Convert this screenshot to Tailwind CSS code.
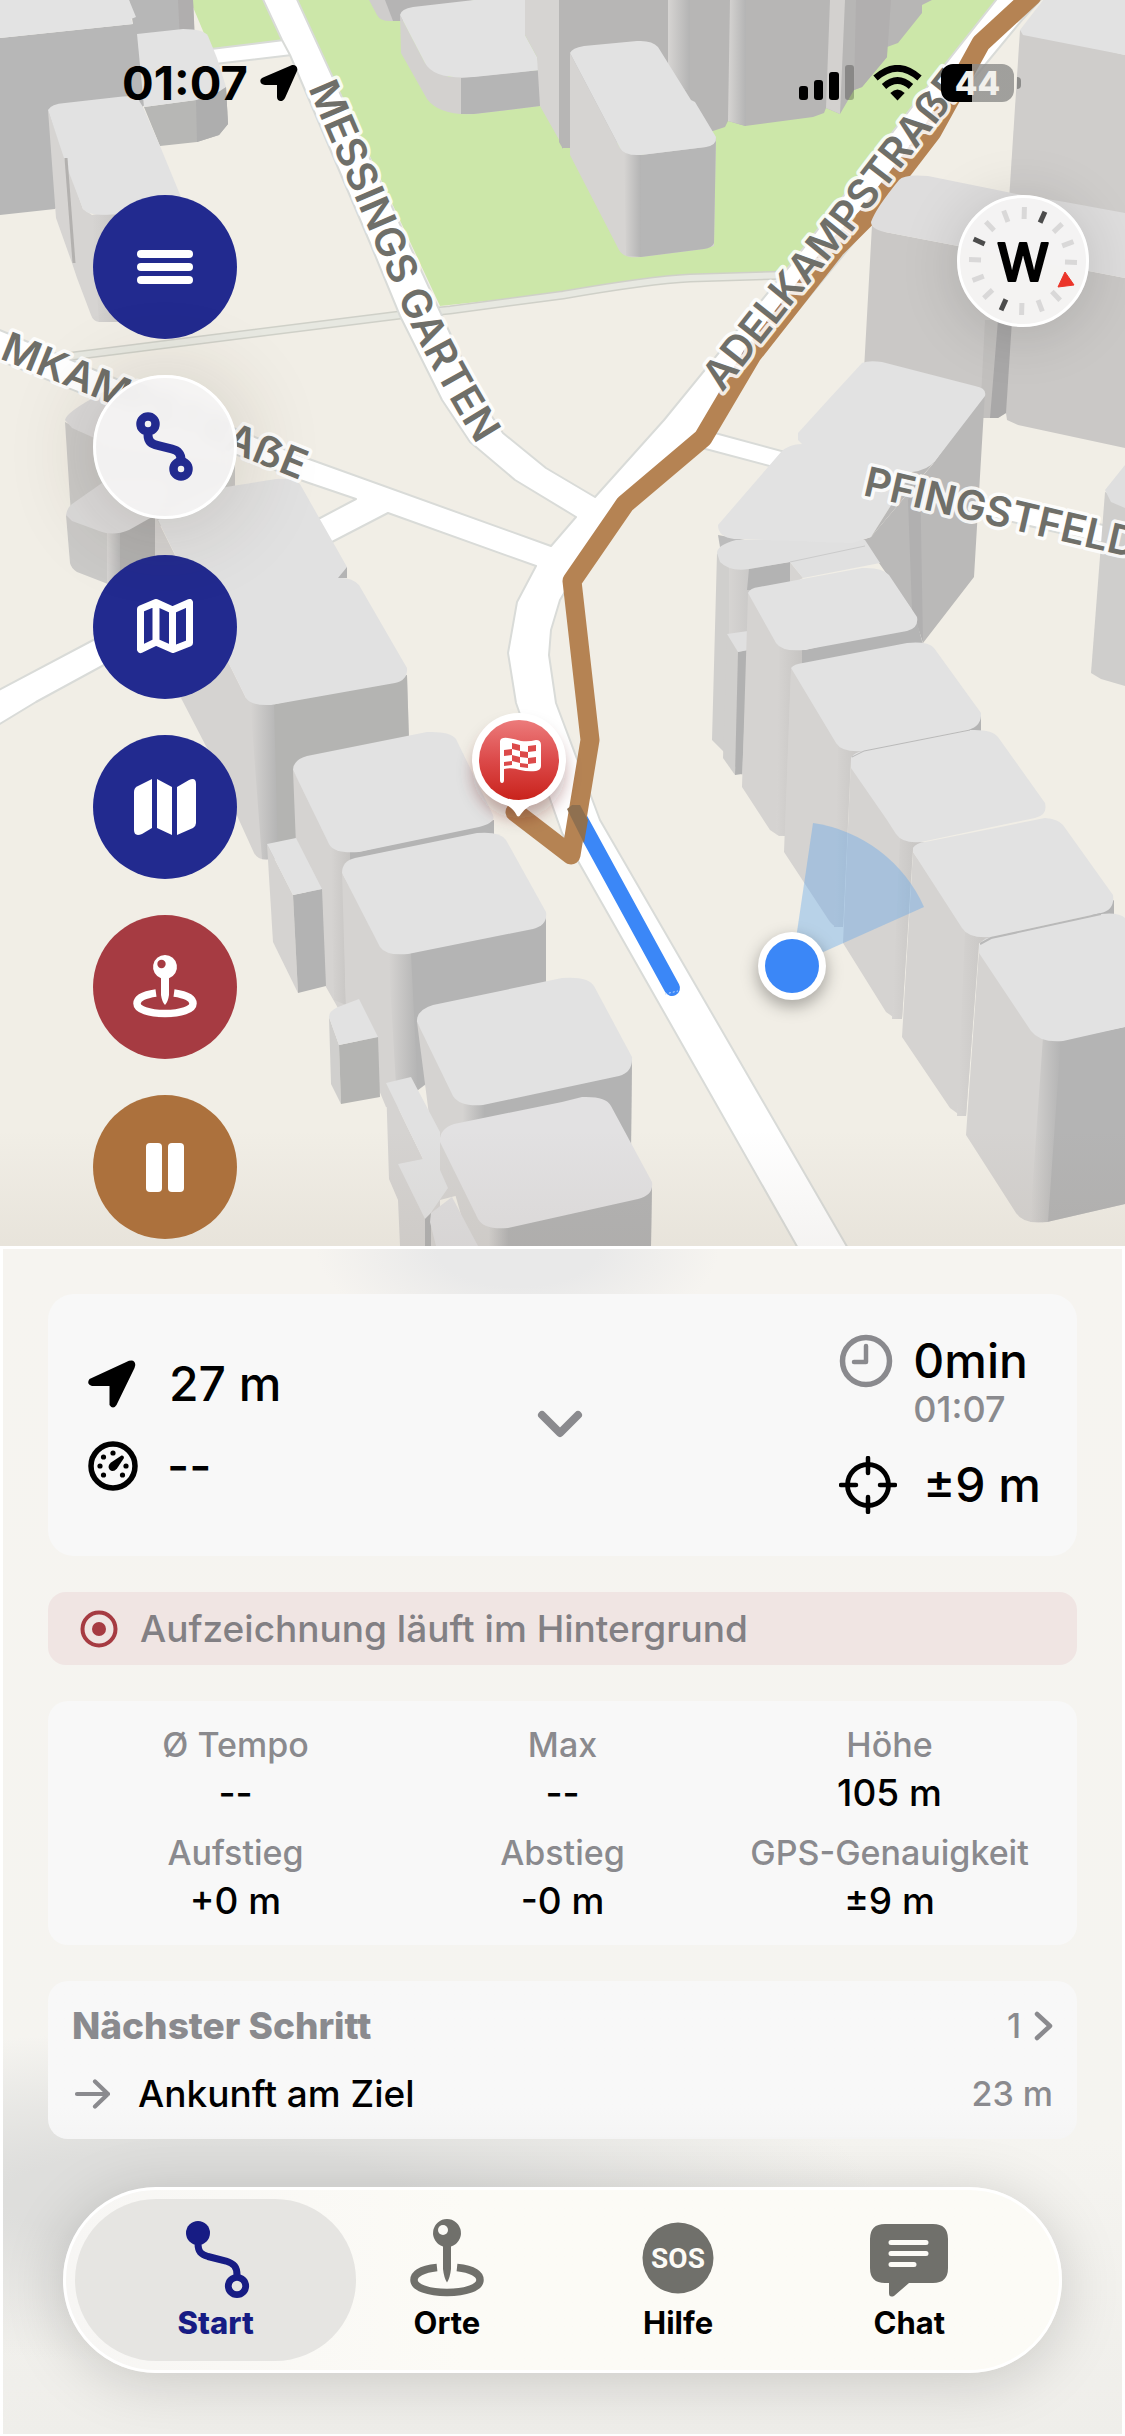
<!DOCTYPE html>
<html lang="de">
<head>
  <meta charset="UTF-8">
  <meta name="viewport" content="width=device-width, initial-scale=1">
  <title>Navigation</title>
  <script src="https://cdn.jsdelivr.net/npm/@tailwindcss/browser@4"></script>
</head>
<body class="min-h-screen flex flex-col bg-[#f1eee6] font-['Inter','Noto_Sans',sans-serif] font-medium text-black">

  <!-- Map with floating controls -->
  <section class="relative flex-1 overflow-hidden">
    <svg class="absolute inset-0 w-full h-full" viewBox="0 0 1125 1246" preserveAspectRatio="xMidYMax slice" aria-hidden="true">
      <defs>
        <linearGradient id="corner"><stop offset="0" stop-color="#d6d4d2"/><stop offset="1" stop-color="#b4b4b4"/></linearGradient>
        <linearGradient id="edge"><stop offset="0" stop-color="#d6d4d2"/><stop offset="1" stop-color="#c6c4c2"/></linearGradient>
        <linearGradient id="pin" x2="0" y2="1"><stop offset="0" stop-color="#ec7b7b"/><stop offset=".5" stop-color="#dc4a4a"/><stop offset="1" stop-color="#c9231c"/></linearGradient>
        <linearGradient id="fade" x2="0" y2="1"><stop offset="0" stop-color="#8a7a6a" stop-opacity="0"/><stop offset="1" stop-color="#8a7a6a" stop-opacity=".09"/></linearGradient>
        <filter id="soft" x="-50%" y="-50%" width="200%" height="200%"><feGaussianBlur stdDeviation="8"/></filter>
        <path id="messings" d="M308 88L400 302Q438 386 500 480"/>
        <path id="adelkamp" d="M722 393Q760 345 794 302L855 228L905 163L1020 17"/>
      </defs>
      <rect width="1125" height="1246" fill="#f1eee6"/>

      <!-- parks -->
      <g fill="#cce7a9">
        <path d="M190 0H263L282 40L211 50Z"/>
        <path d="M297 0L440 306L563 293L670 279L780 274L792 263L935 77L996 0Z"/>
      </g>

      <!-- footpath -->
      <g fill="none" stroke-linejoin="round">
        <path d="M65 357L400 315L450 310L563 295Q650 280 690 278L790 275" stroke="#cfd0c8" stroke-width="9"/>
        <path d="M65 357L400 315L450 310L563 295Q650 280 690 278L790 275" stroke="#e7e8e1" stroke-width="6"/>
      </g>

      <!-- streets -->
      <g fill="#fff" stroke="#d9dbd8" stroke-width="2" stroke-linejoin="round">
        <path d="M211 49L284 40L292 55L215 64Z"/>
        <path d="M-5 328L298 455L551 546L576 517L515 480L470 442L442 400L400 316L370 243L290 55L282 40L261 -5H295L437 305L481 400L503 433L546 468L595 497L664 420L792 263L935 77L1000 -5H1045L1022 20L975 77L860 235L757 360L715 433L800 456V474L698 447L622 508L575 575L560 600L551 630L549 655L556 703L600 820L849 1250H799L562 833L516 703L508 653L517 602L536 566L388 513L332 542L104 665L36 702L-5 727V692L97 638L320 518L356 499L300 480L-5 359Z"/>
        <path d="M830 462L1125 530V548L830 480Z"/>
      </g>

      <!-- route -->
      <path d="M577 814L672 988" fill="none" stroke="#3b87f7" stroke-width="16" stroke-linecap="round"/>
      <path d="M1032 -4L981 43L932 132L866 218L836 248L752 355L703 438L625 504L572 581L590 740L571 855L515 812" fill="none" stroke="#b58353" stroke-width="19" stroke-linejoin="round" stroke-linecap="round"/>
      <path d="M567 809L572 805H580L588 820L584 843Z" fill="#8f7050"/>
      <path d="M665 994L678 991" stroke="#b9d6ff" stroke-width="1" stroke-dasharray="2 2"/>

      <!-- buildings, north west -->
      <path d="M0 38L133 24L129 0H193L195 60L139 110L55 209L0 215Z" fill="#b7b7b7"/>
      <path d="M178 0H193L195 40H180Z" fill="#b0aeae"/>
      <path d="M0 0H129L136 17L131 19L133 24L0 38Z" fill="#e3e3e3"/>
      <path d="M144 107L196 100L226 87L228 124L219 135L197 142L160 146Z" fill="#b7b7b5"/>
      <path d="M196 100L226 87L228 124L219 135L197 142Z" fill="#aeaeae"/>
      <path d="M137 34L183 29Q204 29 208 36L217 58L226 87Q214 96 196 100L144 107Z" fill="#e3e3e3"/>
      <path d="M48 110L83 209L92 215L181 197V300L115 322H99Q93 321 91 315L77 278L72 263L56 218Z" fill="#d6d4d2"/>
      <path d="M92 215H125V322H99Z" fill="url(#edge)"/>
      <path d="M48 110Q51 104 65 103L118 97Q134 95 138 99L143 107L160 146L181 197L122 213Q90 218 83 209L68 170Z" fill="#e2e2e2"/>
      <path d="M66 158L74 263" stroke="#b3b1af" stroke-width="3"/>

      <!-- buildings, north -->
      <path d="M369 0L377 15Q380 21 390 21H402V0Z" fill="#cfcdcc"/>
      <path d="M385 0H474L404 21H393Z" fill="#b5b4b4"/>
      <path d="M400 15L425 63L449 77L540 70V106L474 114Q440 116 427 99L401 53Z" fill="#d3d1cf"/>
      <path d="M461 78L540 70V106L474 114H461Z" fill="#b5b5b5"/>
      <path d="M400 15Q401 9 413 7L474 0H525V35L537 57L540 70L474 77Q434 80 425 63Z" fill="#e2e2e2"/>
      <path d="M525 0H562V145L540 106L537 57L525 35Z" fill="#d6d4d2"/>
      <path d="M562 0H932L922 5V13L898 43L887 47V57L862 87L854 90L840 114L826 108L824 113L813 117L745 126L728 121L725 127L713 131L570 148H562Z" fill="#b7b6b5"/>
      <path d="M559 0H563V149L559 142Z" fill="#b7b6b5"/>
      <path d="M668 0H690V90H668Z" fill="url(#corner)"/>
      <path d="M730 0H746V126L728 121Z" fill="url(#corner)"/>
      <path d="M830 0H845L840 114L826 108Z" fill="#d3d1cf"/>
      <path d="M856 0H891L887 57L862 87L854 90Z" fill="#b1afaf"/>
      <path d="M570 53L620 148L641 155L716 137L714 246L704 249L641 257Q624 259 619 250L570 155Z" fill="#d6d4d2"/>
      <path d="M641 155L706 147L716 137L714 243Q712 248 704 249L641 257Z" fill="#b6b6b6"/>
      <path d="M624 152L641 155V257L626 256Z" fill="url(#corner)"/>
      <path d="M570 53Q572 48 584 46L637 41Q652 40 658 47L691 100L695 102L716 137Q717 145 706 147L641 155Q624 156 620 148Z" fill="#e2e2e2"/>

      <!-- buildings, north east -->
      <path d="M1020 30L1125 55V230L1009 200Z" fill="#cfcdcb"/>
      <path d="M1020 30L1047 -5H1125V55L1023 35Z" fill="#e2e2e2"/>
      <path d="M872 225L885 232L1125 278V448L1018 425L1007 420L1006 413L998 418H985L864 370Z" fill="#cac8c6"/>
      <path d="M994 320H1012L1006 413L998 418H985Z" fill="#a9a8a8"/>
      <path d="M985 320H998L990 418H980Z" fill="#c2c0be"/>
      <path d="M871 222Q876 208 899 180Q904 174 928 176L1022 195L1065 202L1125 213V278L885 232Q871 229 871 222Z" fill="#dedddd"/>
      <path d="M985 392L932 465L871 537L853 543L879 563L917 617L923 643L974 577Z" fill="#bab9b8"/>
      <path d="M920 470L908 500L912 610L923 643Z" fill="#b1b0b0"/>
      <path d="M717 553L733 569L790 562V700L742 775L723 751L712 740Z" fill="#d0cfcd"/>
      <path d="M729 566H790V600L747 640H729Z" fill="url(#corner)"/>
      <path d="M749 569L790 562V590H747Z" fill="#b3b3b3"/>
      <path d="M718 535L745 540L720 547Z" fill="#bcbcbc"/>
      <path d="M790 562L803 578L790 585Z" fill="#d6d4d2"/>
      <path d="M717 553Q717 545 736 540H865L880 563L803 578L790 562L749 569Q730 572 720 562Z" fill="#e0e0e0"/>
      <path d="M790 562L865 546" stroke="#cbcbcb"/>
      <path d="M862 363Q869 360 882 362L975 386Q987 388 985 396L932 465Q926 471 912 472L871 537L853 543L734 539Q718 537 718 525L781 452Q789 444 802 444L798 440V433L828 400Z" fill="#e2e2e2"/>
      <path d="M912 472Q928 470 935 461L871 537Z" fill="#bab9b8"/>
      <path d="M727 634L738 652L735 775L723 758Z" fill="#d0cfcd"/>
      <path d="M738 652L748 650L742 774L735 775Z" fill="#b1b1b1"/>
      <path d="M727 634L748 631V650L738 652Z" fill="#e0e0e0"/>
      <path d="M1105 492L1125 500V686L1101 679L1091 673Z" fill="#cfcecc"/>
      <path d="M1105 490L1125 465V508L1111 502Z" fill="#dfdfdf"/>

      <!-- buildings, east row -->
      <path d="M748 593L787 650L804 650L917 625L923 643L800 665L785 836H779L770 830L742 787Z" fill="#d5d3d1"/>
      <path d="M787 650H806L917 622L923 645L791 670Z" fill="#b4b4b4"/>
      <path d="M779 645H802V668L791 670L785 836L776 834Z" fill="url(#edge)"/>
      <path d="M748 593Q750 588 759 587L862 568Q882 567 889 575L917 617Q919 628 907 631L804 650Q782 652 776 643Z" fill="#e2e2e2"/>
      <path d="M791 668L846 749L868 751L851 758L843 927H838Q832 926 828 919L784 852Z" fill="#d5d3d1"/>
      <path d="M838 744L864 751L851 758L843 927H834Z" fill="url(#edge)"/>
      <path d="M960 725L981 715V735Z" fill="#b4b4b4"/>
      <path d="M791 668Q794 664 803 663L907 643Q928 641 934 648L981 713Q982 726 968 730L864 751Q842 753 836 743Z" fill="#e2e2e2"/>
      <path d="M851 758L908 842H925L913 848L902 1019H896L886 1012L843 943Z" fill="#d5d3d1"/>
      <path d="M900 838L921 842L913 848L902 1019H892Z" fill="url(#edge)"/>
      <path d="M851 768V758Q854 752 864 751L970 730Q992 729 998 737L1045 803Q1048 815 1035 818L921 842Q903 844 896 834L887 820Z" fill="#e2e2e2"/>
      <path d="M852 757L864 751L970 730" fill="none" stroke="#b9b9b9"/>
      <path d="M913 852L973 936H995L979 943L966 1116H961L950 1108L902 1037Z" fill="#d5d3d1"/>
      <path d="M965 932L991 937L979 943L966 1116H957Z" fill="url(#edge)"/>
      <path d="M1090 915L1114 900V920Z" fill="#b4b4b4"/>
      <path d="M913 852V848Q916 843 925 842L1045 818Q1058 819 1063 825L1113 895Q1115 910 1101 913L991 937Q969 939 962 928Z" fill="#e2e2e2"/>
      <path d="M979 950L1045 1040H1063L1125 1027V1204L1047 1222Q1024 1225 1016 1213L966 1135Z" fill="#d5d3d1"/>
      <path d="M1060 1040L1125 1027V1204L1047 1222Z" fill="#b4b4b4"/>
      <path d="M1043 1037H1061L1048 1222H1030Z" fill="url(#corner)"/>
      <path d="M979 953V945Q982 939 991 937L1101 914Q1119 912 1125 918V1027L1063 1041Q1040 1043 1031 1031Z" fill="#e2e2e2"/>
      <path d="M980 944L991 938L1101 914" fill="none" stroke="#b9b9b9" stroke-width="2"/>

      <!-- buildings, west -->
      <path d="M65 422L100 440L235 440V490L152 530L71 515Z" fill="#cbcac8"/>
      <path d="M65 420Q66 414 86 402L110 388H170L235 460L110 445L72 428Z" fill="#dad9d9"/>
      <path d="M66 515L110 534L155 515V590L108 584L77 572Q71 568 70 563Z" fill="#cbcac8"/>
      <path d="M107 530H122V588L107 584Z" fill="url(#corner)"/>
      <path d="M120 533L155 510V590L120 588Z" fill="#b1b0af"/>
      <path d="M66 515Q67 508 72 504L102 483H170L152 517L129 530Q115 536 102 532L72 521Z" fill="#dbdada"/>
      <path d="M155 515L246 698L271 705L407 675L409 740L293 800L296 850L267 860Q258 860 254 853L239 820L208 750L181 698L155 640Z" fill="#d5d3d1"/>
      <path d="M271 705L407 675L409 740L296 850H271Z" fill="#b4b4b2"/>
      <path d="M250 700L274 704L278 859H262Z" fill="url(#corner)"/>
      <path d="M158 520L226 487L276 479Q294 478 300 484L347 567Q348 575 338 578Q352 577 359 585L407 668Q408 680 395 683L271 705Q251 706 246 698Z" fill="#e1e1e1"/>
      <path d="M347 567V578L338 578Z" fill="#b4b4b4"/>
      <path d="M293 770L339 852L494 820V835L343 870L346 1005L338 1008L326 987L296 845Z" fill="#d5d3d1"/>
      <path d="M339 852H359L494 820V836L343 868Z" fill="#b4b4b4"/>
      <path d="M330 846L350 852V862L343 868L346 1005L334 1000Z" fill="url(#edge)"/>
      <path d="M293 770Q293 760 307 756L427 732Q450 731 456 739L493 815Q496 823 479 827L359 852Q334 854 329 844Z" fill="#e2e2e2"/>
      <path d="M267 844L293 895L298 993L273 942Z" fill="#d5d3d1"/>
      <path d="M293 895L322 889L326 986L298 993Z" fill="#b3b3b3"/>
      <path d="M267 844L296 838L322 889L293 895Z" fill="#e2e2e2"/>
      <path d="M342 873L390 954L546 915V1000L418 1090L411 1110L386 1107L346 1010Z" fill="#d5d3d1"/>
      <path d="M408 954L546 915V990L418 1090L411 1080Z" fill="#b4b4b4"/>
      <path d="M388 950L411 954L418 1095L396 1085Z" fill="url(#corner)"/>
      <path d="M342 873Q342 861 355 858L477 833Q500 831 506 840L546 912Q548 925 533 929L408 954Q386 956 380 947Z" fill="#e2e2e2"/>
      <path d="M329 1017L339 1045L341 1104L331 1084Z" fill="#d0cfcd"/>
      <path d="M339 1045L378 1037L380 1097L341 1104Z" fill="#b4b4b2"/>
      <path d="M329 1017Q329 1011 338 1007L359 999L378 1037L339 1045Z" fill="#e2e2e2"/>
      <path d="M417 1022L465 1104L483 1105L632 1060L631 1150L440 1200Z" fill="#d5d3d1"/>
      <path d="M479 1104L632 1060L631 1150L479 1130Z" fill="#b3b3b3"/>
      <path d="M462 1102L484 1104V1122H462Z" fill="url(#corner)"/>
      <path d="M417 1022Q416 1010 433 1005L562 978Q588 976 594 986L632 1057Q633 1072 619 1076L483 1105Q460 1107 453 1096Z" fill="#e2e2e2"/>
      <path d="M386 1083L423 1159L440 1180V1246H400L398 1200L389 1179Z" fill="#d5d3d1"/>
      <path d="M386 1083L411 1077L440 1132V1170L448 1188L430 1214L425 1219L398 1164L423 1159Z" fill="#e1e1e1"/>
      <path d="M425 1219L431 1213V1246H425Z" fill="#b1b1b1"/>
      <path d="M440 1142L489 1228L652 1185L651 1246H470Z" fill="#d5d3d1"/>
      <path d="M430 1222L431 1213L452 1197L478 1246H436Z" fill="#dfdedf"/>
      <path d="M506 1228L652 1185L651 1246H504Z" fill="#b3b3b3"/>
      <path d="M488 1226H508V1246H488Z" fill="url(#corner)"/>
      <path d="M440 1142Q439 1129 454 1124L562 1102L582 1097Q606 1096 611 1106L652 1182Q654 1195 638 1199L508 1228Q484 1230 478 1219Z" fill="#e2e1e2"/>

      <!-- street names -->
      <g class="font-['Inter','Noto_Sans',sans-serif] font-semibold text-[41px]" fill="#6f6f69" stroke="#fff" stroke-opacity=".85" stroke-width="7" stroke-linejoin="round" paint-order="stroke">
        <text><textPath href="#messings">MESSINGS GARTEN</textPath></text>
        <text><textPath href="#adelkamp">ADELKAMPSTRAẞE</textPath></text>
        <text text-anchor="end" transform="translate(300 480) rotate(22)">MKAMPSTRAẞE</text>
        <text transform="translate(862 495) rotate(13)">PFINGSTFELD</text>
      </g>

      <!-- own position -->
      <path d="M792 966L813 823A144 144 0 0 1 924 907Z" fill="#63a7ec" fill-opacity=".4"/>
      <circle cx="792" cy="972" r="35" fill="#000" fill-opacity=".3" filter="url(#soft)"/>
      <circle cx="792" cy="966" r="34" fill="#fff"/>
      <circle cx="792" cy="966" r="27" fill="#3b87f7"/>

      <!-- destination pin -->
      <circle cx="519" cy="772" r="46" fill="#5a1f1f" fill-opacity=".35" filter="url(#soft)"/>
      <circle cx="519" cy="760" r="47" fill="#fff"/>
      <path d="M495 799Q512 806 516 814Q518 819 521 814Q526 806 543 799Z" fill="#fff"/>
      <circle cx="519" cy="760" r="40" fill="url(#pin)"/>
      <path d="M500 741Q501 737 508 738Q515 739 521 741Q529 742 536 740Q541 740 541 745V766Q541 770 536 771Q528 772 520 770Q512 767 504 769V780Q504 783 502 783Q500 783 500 780Z" fill="#fff"/>
      <path d="M512 743L520 745V751L512 749ZM528 746L536 745V751L528 752ZM504 750L512 749V755L504 756ZM520 751L528 752V758L520 757ZM512 755L520 757V763L512 761ZM528 758L536 757V763L528 764ZM504 762L512 761V765L504 766ZM520 763L528 764V768L520 767Z" fill="#dc4a4a"/>

      <rect y="1130" width="1125" height="116" fill="url(#fade)"/>
    </svg>

    <div class="relative flex flex-col pb-[7px]">
      <!-- Status bar -->
      <header class="flex items-center justify-between pl-[122px] pr-[104px] pt-[55px]">
        <div class="flex items-center gap-3">
          <time class="text-[47px] leading-[56px] font-bold">01:07</time>
          <svg class="w-[38px] h-[38px]" viewBox="0 0 38 38" aria-hidden="true"><path d="M31 1.500C35 0 38.500 3 37 7L25 34C23 38.500 17 38 17 33V21H5C0 21-1.500 15.500 3 13.500Z"/></svg>
        </div>
        <div class="flex items-center gap-[19px]">
          <svg class="w-[55px] h-[36px]" viewBox="0 0 55 36" aria-hidden="true"><rect y="21" width="9" height="14" rx="3"/><rect x="15" y="15" width="9" height="20" rx="3"/><rect x="30" y="7" width="10" height="28" rx="3"/><rect x="46" width="9" height="35" rx="3" fill-opacity=".25"/></svg>
          <svg class="w-[49px] h-[36px]" viewBox="0 0 49 36" aria-hidden="true"><path d="M24.500 35.500L17.300 28Q24.500 21 31.700 28Z"/><path d="M11 21.500Q24.500 9.500 38 21.500" fill="none" stroke="#000" stroke-width="6.500"/><path d="M2.500 13Q24.500-6.500 46.500 13" fill="none" stroke="#000" stroke-width="6.500"/></svg>
          <div class="flex items-center gap-[3px]">
            <span class="w-[73px] h-[38px] rounded-[12px] bg-linear-to-r from-black from-43% to-[#8c8c8a]/80 to-43% text-center text-[33px] leading-[38px] font-extrabold text-[#f1f0ec]">44</span>
            <span class="w-1 h-3 rounded-r-full bg-[#8c8c8a]"></span>
          </div>
        </div>
      </header>

      <div class="mt-[84px] flex items-start justify-between pl-[93px] pr-9">
        <div class="flex flex-col gap-9">
          <button aria-label="Menü" class="size-36 rounded-full bg-[#222a8f] flex items-center justify-center">
            <svg class="w-[56px] h-[34px]" viewBox="0 0 56 34" fill="#fff"><rect width="56" height="8" rx="4"/><rect y="13" width="56" height="8" rx="4"/><rect y="26" width="56" height="8" rx="4"/></svg>
          </button>
          <button aria-label="Route" class="size-36 rounded-full bg-[#f5f4f4]/92 border-3 border-white backdrop-blur-sm shadow-[0_6px_90px_rgba(60,40,20,0.2)] flex items-center justify-center">
            <svg class="w-[58px] h-[70px]" viewBox="0 0 58 70" fill="none" stroke="#222a8f"><circle cx="12" cy="12" r="7.500" stroke-width="8.500"/><circle cx="45" cy="57" r="7.500" stroke-width="8.500"/><path d="M12 23C12 30 16 32 22 33.500L36 37C42 38.500 45 41 45 48" stroke-width="9"/></svg>
          </button>
          <button aria-label="Karte" class="size-36 rounded-full bg-[#222a8f] flex items-center justify-center">
            <svg class="w-[58px] h-[56px]" viewBox="0 0 58 56" fill="none" stroke="#fff" stroke-width="7" stroke-linejoin="round"><path d="M4.500 10L20 3.500L36.500 11L53.500 3.500V44L37 50.500L20 43L4.500 50.500ZM20 3.500V43M36.500 11V50"/></svg>
          </button>
          <button aria-label="Kartenstil" class="size-36 rounded-full bg-[#222a8f] flex items-center justify-center">
            <svg class="w-[62px] h-[58px]" viewBox="0 0 62 58" fill="#fff"><path d="M0 14Q0 10 3 8.500L18 1V50L8 56Q0 59 0 52Z"/><path d="M23 1L38 9V57L23 50Z"/><path d="M43 9L55 2Q62-1 62 6V45Q62 48 59 50L43 57Z"/></svg>
          </button>
          <button aria-label="Ziel setzen" class="size-36 rounded-full bg-[#a63b42] flex items-center justify-center">
            <svg class="w-[64px] h-[64px]" viewBox="0 0 64 64" fill="#fff"><path d="M32 0A12 12 0 0 1 36 23.300V40Q35 47 32 50Q29 47 28 40V23.300A12 12 0 0 1 32 0Z"/><circle cx="28.500" cy="9" r="4.200" fill="#a63b42"/><path d="M23 38C12 39.500 4 43 4 48.500C4 54.500 16 58.500 32 58.500S60 54.500 60 48.500C60 43 52 39.500 41 38" fill="none" stroke="#fff" stroke-width="7.500"/></svg>
          </button>
          <button aria-label="Aufzeichnung pausieren" class="size-36 rounded-full bg-[#ac713d] flex items-center justify-center">
            <svg class="w-[38px] h-[49px]" viewBox="0 0 38 49" fill="#fff"><rect width="16" height="49" rx="4"/><rect x="22" width="16" height="49" rx="4"/></svg>
          </button>
        </div>

        <button aria-label="Kompass" class="size-[132px] rounded-full bg-[#f5f4f4]/97 border-3 border-white shadow-[0_6px_60px_rgba(0,0,0,0.15)] flex items-center justify-center">
          <svg class="w-[126px] h-[126px]" viewBox="-63 -63 126 126">
            <g transform="rotate(24)" stroke="#d9d8d8" stroke-width="5">
              <path d="M0-54V-42" transform="rotate(22.500)"/><path d="M0-54V-42" transform="rotate(45)"/><path d="M0-54V-42" transform="rotate(67.500)"/>
              <path d="M0-54V-42" transform="rotate(112.500)"/><path d="M0-54V-42" transform="rotate(135)"/><path d="M0-54V-42" transform="rotate(157.500)"/>
              <path d="M0-54V-42" transform="rotate(202.500)"/><path d="M0-54V-42" transform="rotate(225)"/><path d="M0-54V-42" transform="rotate(247.500)"/>
              <path d="M0-54V-42" transform="rotate(292.500)"/><path d="M0-54V-42" transform="rotate(315)"/><path d="M0-54V-42" transform="rotate(337.500)"/>
              <g stroke="#4c4c4c"><path d="M0-54V-42"/><path d="M0-54V-42" transform="rotate(180)"/><path d="M0-54V-42" transform="rotate(270)"/></g>
            </g>
            <path d="M42 11L51 24L35 26Z" fill="#eb3429" stroke="#eb3429" stroke-width="1" stroke-linejoin="round"/>
            <text y="20" text-anchor="middle" class="font-['Inter',sans-serif] font-medium text-[52px]" stroke="#000" stroke-width="2" stroke-linejoin="round">W</text>
          </svg>
        </button>
      </div>
    </div>
  </section>

  <!-- Bottom sheet -->
  <section class="border-3 border-b-2 border-white bg-[#f5f4f0] bg-[radial-gradient(ellipse_18%_8%_at_46%_0%,#e9e9e9_40%,transparent),radial-gradient(ellipse_60%_14%_at_18%_80%,#dededc_30%,transparent),linear-gradient(to_bottom,#f6f4f0,#f5f4f0_75%,#efeeea)] px-[45px] pt-[45px] pb-[61px] flex flex-col">
    <main class="flex flex-col gap-9">
      <div class="rounded-[26px] bg-[#f8f8f8] pl-10 pr-9 py-[37px] flex items-center justify-between">
        <div class="flex flex-col gap-[22px] text-[48px] leading-[60px]">
          <div class="flex items-center gap-[33px]">
            <svg class="w-[48px] h-[48px]" viewBox="0 0 48 48" aria-hidden="true"><path d="M41 .800Q47-1 47.300 5L46.500 8L28.500 45Q25 50 21.500 45V26H4Q-2 24 1.500 19Z"/></svg>
            <span>27 m</span>
          </div>
          <div class="flex items-center gap-[29px]">
            <svg class="w-[50px] h-[50px]" viewBox="0 0 50 50" aria-hidden="true"><circle cx="25" cy="25" r="22" fill="none" stroke="#000" stroke-width="5.500"/><g><circle cx="25" cy="12" r="2.600"/><circle cx="15.500" cy="16" r="2.600"/><circle cx="12" cy="25" r="2.600"/><circle cx="15.500" cy="34" r="2.600"/><circle cx="34.500" cy="34" r="2.600"/><circle cx="38" cy="25" r="2.600"/></g><path d="M33.500 14.500Q36 14 36 17L29 27.500Q25 32 21.500 28.500Q19 25 23 21.500Z"/></svg>
            <span>--</span>
          </div>
        </div>
        <button aria-label="Einklappen">
          <svg class="w-[46px] h-[30px]" viewBox="0 0 46 30" fill="none" stroke="#8a8a8e" stroke-width="8" stroke-linecap="round" stroke-linejoin="round"><path d="M5 5L23 23L41 5"/></svg>
        </button>
        <div class="text-[48px] leading-[60px]">
          <div class="flex items-center gap-5">
            <svg class="w-[54px] h-[54px]" viewBox="0 0 54 54" fill="none" stroke="#8a8a8e" aria-hidden="true"><circle cx="27" cy="27" r="23.500" stroke-width="5.500"/><path d="M27 12V28H15" stroke-width="4.500" stroke-linecap="round" stroke-linejoin="round"/></svg>
            <span>0min</span>
          </div>
          <div class="pl-[74px] text-[36px] leading-9 text-[#8a8a8e]">01:07</div>
          <div class="mt-7 mb-1 flex items-center gap-[26px]">
            <svg class="w-[58px] h-[58px]" viewBox="0 0 58 58" fill="none" stroke="#000" aria-hidden="true"><circle cx="29" cy="29" r="20.500" stroke-width="4.800"/><path d="M29 2V17M29 41V56M2 29H17M41 29H56" stroke-width="4.500" stroke-linecap="round"/></svg>
            <span>±9 m</span>
          </div>
        </div>
      </div>

      <div class="rounded-[18px] bg-[#f0e5e3] px-8 py-3 flex items-center gap-[22px] text-[37px] leading-[49px] text-[#828084]">
        <svg class="w-[38px] h-[38px]" viewBox="0 0 38 38" aria-hidden="true"><circle cx="19" cy="19" r="16.500" fill="none" stroke="#a63b42" stroke-width="4"/><circle cx="19" cy="19" r="7" fill="#a63b42"/></svg>
        <p>Aufzeichnung läuft im Hintergrund</p>
      </div>

      <dl class="rounded-[20px] bg-[#f8f8f8] px-6 pt-6 pb-5 grid grid-cols-3 gap-y-4 text-center text-[37px] leading-[48px]">
        <div class="flex flex-col gap-1"><dt class="text-[34px] leading-10 text-[#8a8a8e]">Ø Tempo</dt><dd>--</dd></div>
        <div class="flex flex-col gap-1"><dt class="text-[34px] leading-10 text-[#8a8a8e]">Max</dt><dd>--</dd></div>
        <div class="flex flex-col gap-1"><dt class="text-[34px] leading-10 text-[#8a8a8e]">Höhe</dt><dd>105 m</dd></div>
        <div class="flex flex-col gap-1"><dt class="text-[34px] leading-10 text-[#8a8a8e]">Aufstieg</dt><dd>+0 m</dd></div>
        <div class="flex flex-col gap-1"><dt class="text-[34px] leading-10 text-[#8a8a8e]">Abstieg</dt><dd>-0 m</dd></div>
        <div class="flex flex-col gap-1"><dt class="text-[34px] leading-10 text-[#8a8a8e]">GPS-Genauigkeit</dt><dd>±9 m</dd></div>
      </dl>

      <div class="rounded-[20px] bg-linear-to-b from-[#f8f8f8] from-80% to-[#f5f5f5] px-6 py-[21px] flex flex-col gap-5 text-[37px] leading-[48px]">
        <div class="flex items-center justify-between text-[#8a8a8e]">
          <h2 class="font-extrabold">Nächster Schritt</h2>
          <a href="#" class="flex items-center gap-3 text-[34px]">1
            <svg class="w-5 h-[30px]" viewBox="0 0 20 30" fill="none" stroke="#8a8a8e" stroke-width="4.500" stroke-linecap="round" stroke-linejoin="round" aria-hidden="true"><path d="M4 3L17 15L4 27"/></svg>
          </a>
        </div>
        <div class="flex items-center">
          <svg class="w-[38px] h-[30px] mr-[28px]" viewBox="0 0 38 30" fill="none" stroke="#8a8a8e" stroke-width="4.200" stroke-linecap="round" stroke-linejoin="round" aria-hidden="true"><path d="M5 15H36M23 2.500L36 15L23 27.500"/></svg>
          <span>Ankunft am Ziel</span>
          <span class="ml-auto text-[34px] text-[#8a8a8e]">23 m</span>
        </div>
      </div>
    </main>

    <!-- Tab bar -->
    <nav class="mt-12 mx-[15px] rounded-full border-3 border-white bg-linear-to-r from-[#f7f6f4] to-[#fcfbf6] to-40% px-[34px] py-[9px] grid grid-cols-4 text-center text-[31px] leading-10 font-bold shadow-[0_8px_60px_rgba(0,0,0,0.17)]">
      <a href="#" aria-current="page" class="-mx-[25px] rounded-full bg-[#e6e5e2] pt-5 pb-[18px] flex flex-col items-center gap-1 text-[#171c84] font-extrabold">
        <svg class="size-20" viewBox="0 0 80 80" aria-hidden="true"><circle cx="22" cy="14" r="12" fill="#171c84"/><circle cx="61" cy="67" r="8.700" fill="none" stroke="#171c84" stroke-width="6.800"/><path d="M22 24C22 33 25 35.500 32 37.500L50 42C58 44.500 61 48 61 56" fill="none" stroke="#171c84" stroke-width="7"/></svg>
        Start
      </a>
      <a href="#" class="pt-5 pb-[18px] flex flex-col items-center gap-1">
        <svg class="size-20" viewBox="0 0 80 80" fill="#70706b" aria-hidden="true"><path d="M40 0A14 14 0 0 1 44 27.400V50Q43 59 40 63.500Q37 59 36 50V27.400A14 14 0 0 1 40 0Z"/><circle cx="36" cy="11" r="5" fill="#fbfaf6"/><path d="M30 48.500C16 50 7 54.500 7 61C7 68.500 21 73.500 40 73.500S73 68.500 73 61C73 54.500 64 50 50 48.500" fill="none" stroke="#70706b" stroke-width="7.500"/></svg>
        Orte
      </a>
      <a href="#" class="pt-5 pb-[18px] flex flex-col items-center gap-1">
        <svg class="size-20" viewBox="0 0 80 80" fill="#70706b" aria-hidden="true"><circle cx="40" cy="39" r="35.500"/><text x="40" y="49" text-anchor="middle" fill="#fcfbf6" class="font-['Roboto',sans-serif] font-bold text-[28px]">SOS</text></svg>
        Hilfe
      </a>
      <a href="#" class="pt-5 pb-[18px] flex flex-col items-center gap-1">
        <svg class="size-20" viewBox="0 0 80 80" fill="#70706b" aria-hidden="true"><path d="M16 5H64Q79 5 79 20V49Q79 64 64 64H40L25 77Q20 79 20 74V64H16Q1 64 1 49V20Q1 5 16 5Z"/><path d="M22 23.500H57M22 34.500H57M22 45.500H45" stroke="#fcfbf6" stroke-width="5" stroke-linecap="round"/></svg>
        Chat
      </a>
    </nav>
  </section>
</body>
</html>
